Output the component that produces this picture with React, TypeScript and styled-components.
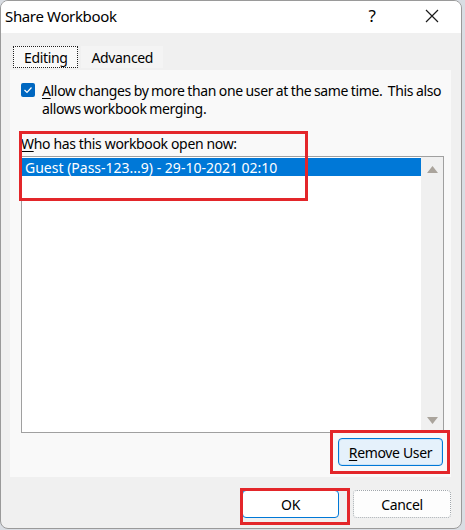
import React from 'react';
import styled, { createGlobalStyle } from 'styled-components';

const GlobalStyle = createGlobalStyle`
  html, body {
    margin: 0;
    padding: 0;
    background: #d9dde3;
  }
  body {
    font-family: "Noto Sans", "Open Sans", sans-serif;
    letter-spacing: -0.35px;
    color: #000;
  }
`;

const Window = styled.div`
  position: relative;
  width: 462px;
  height: 529px;
  box-sizing: border-box;
  border: 1px solid #9a9a9a;
  border-radius: 8px;
  background: #f0f0f0;
  overflow: hidden;
  display: flex;
  flex-direction: column;
`;

const TitleBar = styled.div`
  height: 32px;
  background: #ffffff;
  display: flex;
  align-items: center;
  padding-left: 4px;
  font-size: 15px;
  flex-shrink: 0;
`;

const TitleText = styled.span`
  flex: 1;
  margin-top: -2px;
`;

const TitleButton = styled.div<{ $w: number }>`
  width: ${(p) => p.$w}px;
  height: 32px;
  display: flex;
  align-items: center;
  justify-content: center;
  font-size: 17px;
  margin-top: -3px;
`;

const Body = styled.div`
  flex: 1;
  display: flex;
  flex-direction: column;
  padding: 13px 10px 0 9px;
`;

const TabStrip = styled.div`
  display: flex;
  align-items: flex-start;
  height: 24px;
  padding-left: 3px;
`;

const Tab = styled.div<{ $active?: boolean }>`
  height: 22px;
  box-sizing: border-box;
  display: flex;
  align-items: center;
  font-size: 14px;
  padding: 0 ${(p) => (p.$active ? '10px' : '9px')};
  margin-right: ${(p) => (p.$active ? '3px' : '0')};
  border: ${(p) => (p.$active ? '1px dotted #202020' : '1px solid transparent')};
  background: ${(p) => (p.$active ? '#f9f9f9' : '#f4f4f4')};
`;

const Panel = styled.div`
  height: 407px;
  background: #f9f9f9;
  display: flex;
  flex-direction: column;
  padding: 12px 8px 0 11px;
  box-sizing: border-box;
`;

const CheckRow = styled.label`
  display: flex;
  align-items: flex-start;
  gap: 7px;
  font-size: 14px;
  line-height: 18px;
`;

const CheckLabel = styled.span`
  white-space: nowrap;
  word-spacing: -0.6px;
`;

const CheckBox = styled.span`
  width: 14px;
  height: 14px;
  margin-top: 1px;
  flex-shrink: 0;
  border-radius: 2px;
  background: #0067c0;
  display: flex;
  align-items: center;
  justify-content: center;
`;

const Caption = styled.div`
  margin-top: 17px;
  font-size: 14px;
  line-height: 18px;
`;

const Key = styled.span`
  text-decoration: underline;
  text-underline-offset: 2px;
`;

const ListBox = styled.div`
  margin-top: 3px;
  width: 423px;
  height: 277px;
  box-sizing: border-box;
  border: 1px solid #a0a0a0;
  background: #ffffff;
  display: flex;
`;

const ListItems = styled.div`
  flex: 1;
  padding-top: 1px;
`;

const ListRow = styled.div<{ $selected?: boolean }>`
  height: 18px;
  display: flex;
  align-items: center;
  padding-left: 3px;
  font-size: 14px;
  letter-spacing: 0;
  color: ${(p) => (p.$selected ? '#ffffff' : '#000000')};
  background: ${(p) => (p.$selected ? '#0078d7' : 'transparent')};
`;

const ScrollBar = styled.div`
  width: 22px;
  background: #f0f0f0;
  display: flex;
  flex-direction: column;
  justify-content: space-between;
  align-items: center;
  padding: 9px 0 8px;
`;

const ButtonRow = styled.div`
  display: flex;
  justify-content: flex-end;
  margin-top: 5px;
`;

const Button = styled.button<{ $variant: 'primary' | 'focused' | 'plain'; $w: number }>`
  width: ${(p) => p.$w}px;
  height: 28px;
  box-sizing: border-box;
  font-family: inherit;
  letter-spacing: -0.35px;
  font-size: 14px;
  color: #000;
  border-radius: 4px;
  padding: 0;
  border: ${(p) =>
    p.$variant === 'plain' ? '1px dotted #a0a6ab' : '1px solid #0078d7'};
  background: ${(p) =>
    p.$variant === 'focused'
      ? '#e5f1fb'
      : p.$variant === 'primary'
      ? '#ffffff'
      : '#fdfdfd'};
  box-shadow: ${(p) =>
    p.$variant === 'focused' ? 'inset 0 0 0 1px #cce4f7' : 'none'};
`;

const Footer = styled.div`
  display: flex;
  justify-content: flex-end;
  gap: 14px;
  padding-top: 13px;
`;

const Highlight = styled.div`
  position: absolute;
  border: 3px solid #e3262a;
  box-sizing: border-box;
  pointer-events: none;
`;

const Arrow = ({ up }: { up?: boolean }) => (
  <svg width="11" height="7" viewBox="0 0 11 7">
    <path d={up ? 'M5.5 0 L11 7 L0 7 Z' : 'M0 0 L11 0 L5.5 7 Z'} fill="#aaa49c" />
  </svg>
);

export default function App() {
  return (
    <>
      <GlobalStyle />
      <Window>
        <TitleBar>
          <TitleText>Share Workbook</TitleText>
          <TitleButton $w={62}>?</TitleButton>
          <TitleButton $w={58}>
            <svg width="14" height="14" viewBox="0 0 14 14">
              <path d="M1 1 L13 13 M13 1 L1 13" stroke="#1a1a1a" strokeWidth="1.2" />
            </svg>
          </TitleButton>
        </TitleBar>
        <Body>
          <TabStrip>
            <Tab $active>Editing</Tab>
            <Tab>Advanced</Tab>
          </TabStrip>
          <Panel>
            <CheckRow>
              <CheckBox>
                <svg width="10" height="8" viewBox="0 0 10 8">
                  <path d="M1.5 4 L4 6.5 L8.5 1.5" stroke="#fff" strokeWidth="1.2" fill="none" />
                </svg>
              </CheckBox>
              <CheckLabel>
                <Key>A</Key>llow changes by more than one user at the same time.&nbsp; This also
                <br />
                allows workbook merging.
              </CheckLabel>
            </CheckRow>
            <Caption>
              <Key>W</Key>ho has this workbook open now:
            </Caption>
            <ListBox>
              <ListItems>
                <ListRow $selected>Guest (Pass-123...9) - 29-10-2021 02:10</ListRow>
              </ListItems>
              <ScrollBar>
                <Arrow up />
                <Arrow />
              </ScrollBar>
            </ListBox>
            <ButtonRow>
              <Button $variant="focused" $w={105}>
                <Key>R</Key>emove User
              </Button>
            </ButtonRow>
          </Panel>
          <Footer>
            <Button $variant="primary" $w={97}>OK</Button>
            <Button $variant="plain" $w={98}>Cancel</Button>
          </Footer>
        </Body>
        <Highlight style={{ left: 18, top: 130, width: 289, height: 70 }} />
        <Highlight style={{ left: 329, top: 429, width: 120, height: 44 }} />
        <Highlight style={{ left: 239, top: 487, width: 110, height: 37 }} />
      </Window>
    </>
  );
}
